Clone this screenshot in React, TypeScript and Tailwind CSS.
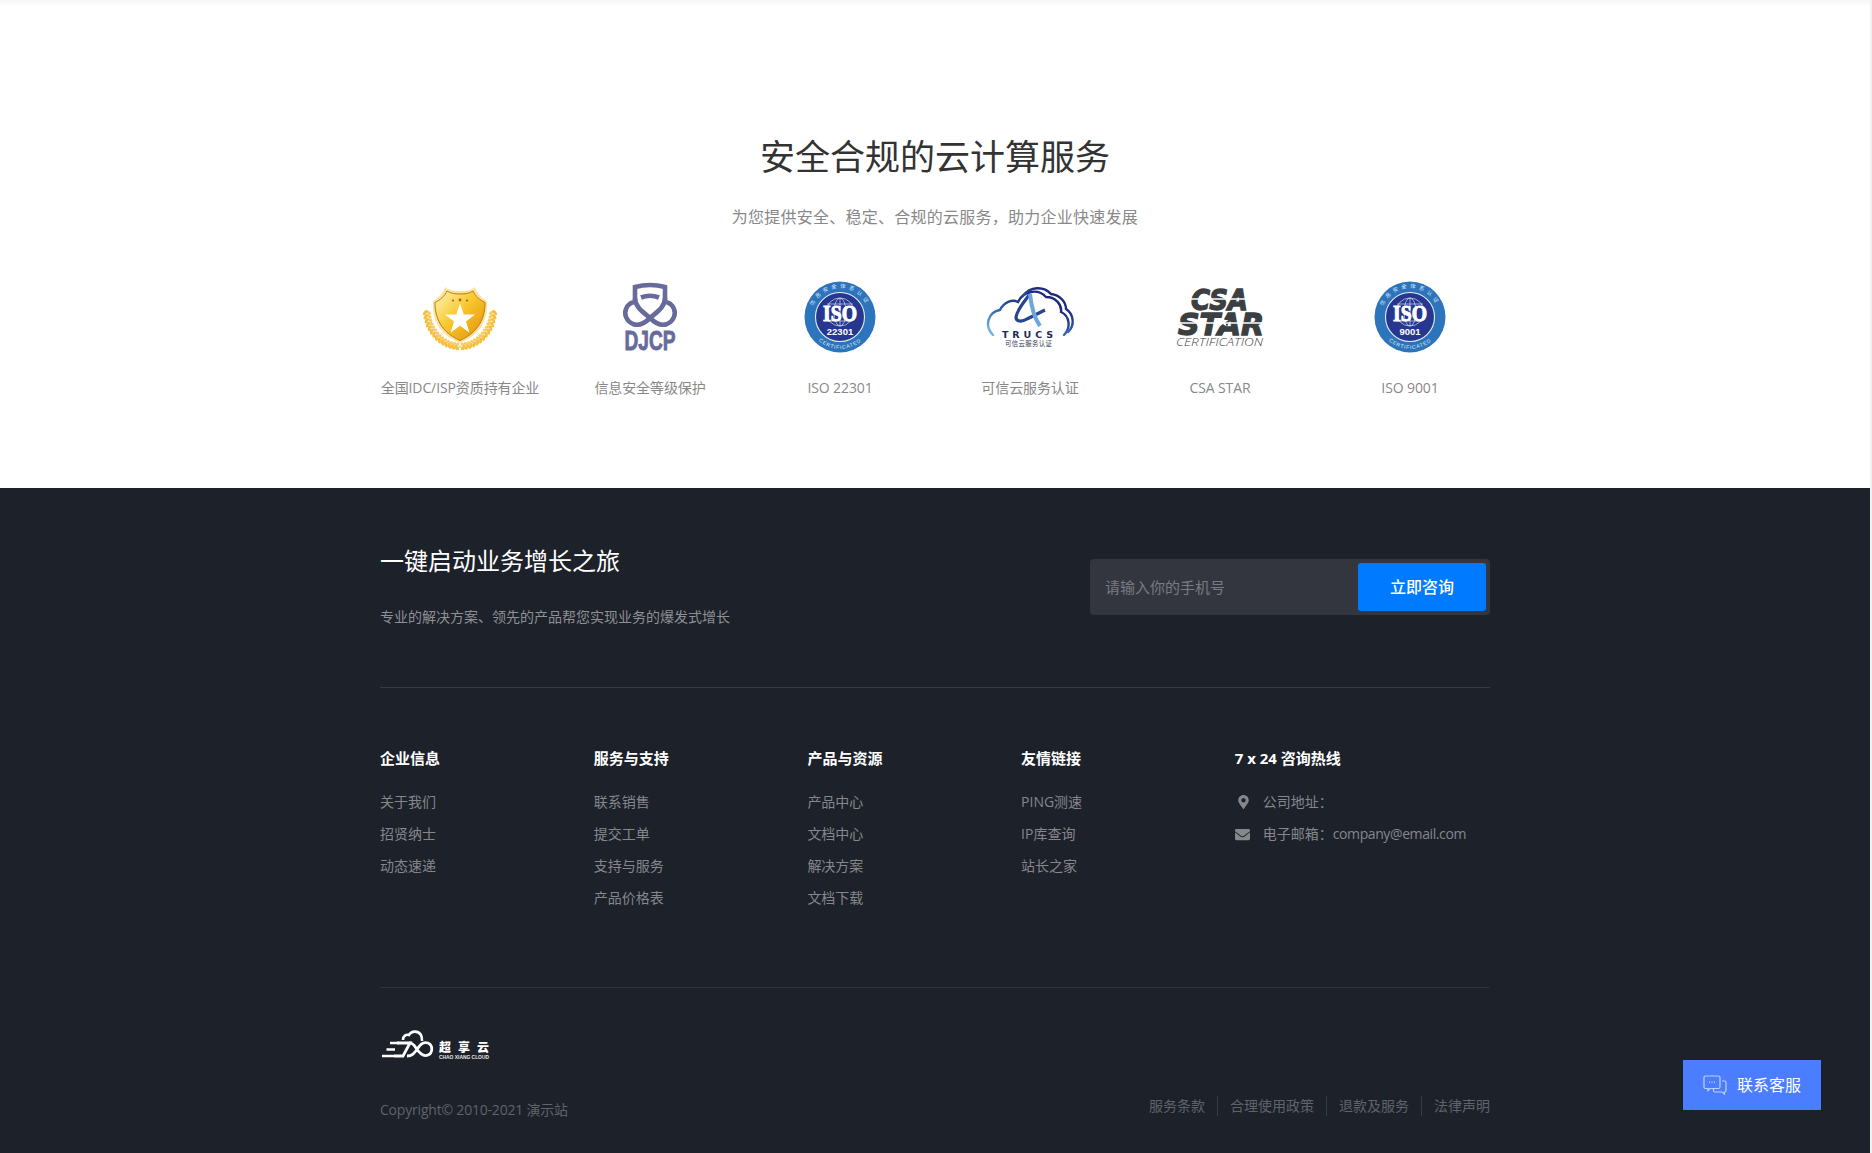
import React from 'react'
import { FaMapMarkerAlt, FaEnvelope } from 'react-icons/fa'

const fontStack = 'font-["Open_Sans","Noto_Sans_CJK_SC",sans-serif]'

const columns = [
  { title: '企业信息', links: ['关于我们', '招贤纳士', '动态速递'] },
  { title: '服务与支持', links: ['联系销售', '提交工单', '支持与服务', '产品价格表'] },
  { title: '产品与资源', links: ['产品中心', '文档中心', '解决方案', '文档下载'] },
  { title: '友情链接', links: ['PING测速', 'IP库查询', '站长之家'] },
]

const legalLinks = ['服务条款', '合理使用政策', '退款及服务', '法律声明']

const ShieldLogo = () => {
  const leaves: { x: number; y: number; r: number; o: number }[] = []
  for (let i = 0; i < 14; i++) {
    const deg = 176 - i * 6.2
    const a = (Math.PI / 180) * deg
    leaves.push({ x: 50 + Math.cos(a) * 35, y: 30 + Math.sin(a) * 38, r: deg - 50, o: 1 })
    leaves.push({ x: 50 + Math.cos(a) * 31.5, y: 30 + Math.sin(a) * 35, r: deg + 40, o: 0.8 })
  }
  return (
    <svg viewBox="0 0 100 74" className="h-[74px] w-[100px]">
      <defs>
        <linearGradient id="gold" x1="0.1" y1="0.1" x2="0.9" y2="0.85">
          <stop offset="0" stopColor="#fdeb9c" />
          <stop offset="0.45" stopColor="#f8c92e" />
          <stop offset="1" stopColor="#e79a0c" />
        </linearGradient>
      </defs>
      {leaves.map((l, i) => (
        <g key={i} opacity={l.o}>
          <ellipse cx={l.x} cy={l.y} rx="3" ry="1.5" fill="#f5bf3a" transform={`rotate(${l.r} ${l.x} ${l.y})`} />
          <ellipse cx={100 - l.x} cy={l.y} rx="3" ry="1.5" fill="#f5bf3a" transform={`rotate(${-l.r} ${100 - l.x} ${l.y})`} />
        </g>
      ))}
      <path d="M46 70l4-4 4 4" fill="none" stroke="#f4c65a" strokeWidth="1.2" />
      <path d="M50 11C44 11 38 10 35 7C33 13 28 19 23 21C22 38 28 54 50 63C72 54 78 38 77 21C72 19 67 13 65 7C62 10 56 11 50 11Z" fill="#fbe29a" />
      <path d="M50 14C44 14 40 13 37 11C35 16 30 20 25 22.5C25 38 31 52 50 60.5C69 52 75 38 75 22.5C70 20 65 16 63 11C60 13 56 14 50 14Z" fill="url(#gold)" stroke="#c07a18" strokeWidth="1" />
      <polygon points="50,23.5 53.8,34.5 65,34.5 56,41.4 59.4,52.5 50,45.8 40.6,52.5 44,41.4 35,34.5 46.2,34.5" fill="#fff" />
      <circle cx="43" cy="20.5" r="1.1" fill="#b0601c" />
      <circle cx="50" cy="20" r="1.4" fill="#b0601c" />
      <circle cx="57" cy="20.5" r="1.1" fill="#b0601c" />
    </svg>
  )
}

const DjcpLogo = () => (
  <svg viewBox="0 0 100 74" className="h-[74px] w-[100px]">
    <g fill="none" stroke="#666b9b" strokeWidth="4.6">
      <path d="M35 20V7Q50 3 65 7V20" />
      <path d="M35 18C35 27 43 32 50 38C56 44 62 46 67 44C74 41 76 34 74 29C72 24 68 22 64 22" />
      <path d="M65 18C65 27 57 32 50 38C44 44 38 46 33 44C26 41 24 34 26 29C28 24 32 22 36 22" />
      <path d="M41 17.5Q50 14 59 17.5" />
    </g>
    <text x="24.5" y="70" textLength="51" lengthAdjust="spacingAndGlyphs" fontFamily="Liberation Sans" fontWeight="700" fontSize="27.5" fill="#666b9b" stroke="#666b9b" strokeWidth="0.9">
      DJCP
    </text>
  </svg>
)

const IsoLogo = ({ id, code }: { id: string; code: string }) => (
  <svg viewBox="0 0 100 74" className="h-[74px] w-[100px]">
    <defs>
      <path id={`${id}-top`} d="M21 37A29 29 0 0 1 79 37" />
      <path id={`${id}-bottom`} d="M18 37A32 32 0 0 0 82 37" />
    </defs>
    <circle cx="50" cy="37" r="35.5" fill="#2c74bb" />
    <circle cx="50" cy="37" r="24.5" fill="#263790" stroke="#e6edf7" strokeWidth="1.1" />
    <text fontSize="5.4" fill="#dbe8f6" fontFamily="Noto Sans CJK SC">
      <textPath href={`#${id}-top`} startOffset="50%" textAnchor="middle" letterSpacing="3.2">
        信息安全体系认证
      </textPath>
    </text>
    <text fontSize="5.2" fill="#dbe8f6" fontFamily="Liberation Sans">
      <textPath href={`#${id}-bottom`} startOffset="50%" textAnchor="middle" letterSpacing="0.8">
        CERTIFICATED
      </textPath>
    </text>
    <g fill="none" stroke="#d4dcf0" strokeWidth="0.7">
      <ellipse cx="50" cy="32" rx="14" ry="14" />
      <ellipse cx="50" cy="32" rx="6" ry="14" />
      <path d="M37 24H63M38 41H62M50 18V46" />
    </g>
    <text x="50" y="41" textAnchor="middle" fontFamily="Liberation Serif" fontWeight="700" fontSize="23" fill="#fff" stroke="#fff" strokeWidth="1" textLength="34" lengthAdjust="spacingAndGlyphs">
      ISO
    </text>
    <text x="50" y="55" textAnchor="middle" fontFamily="Liberation Sans" fontWeight="700" fontSize="9.5" fill="#fff">
      {code}
    </text>
  </svg>
)

const TrucsLogo = () => (
  <svg viewBox="0 0 100 74" className="h-[74px] w-[100px]">
    <defs>
      <linearGradient id="cloud" x1="0" y1="1" x2="0.7" y2="0">
        <stop offset="0.1" stopColor="#6fb0e0" />
        <stop offset="0.5" stopColor="#2c5aa8" />
        <stop offset="0.8" stopColor="#1b2a7c" />
      </linearGradient>
    </defs>
    <g fill="none" stroke="url(#cloud)" strokeWidth="2.4" strokeLinecap="round">
      <path d="M13 55C4 46 8 32 20 30C24 22 32 19 38 22C43 11 58 8 66 17C76 17 82 25 81 32C90 36 91 48 84 55" />
      <path d="M43 16C50 6 64 6 71 14C80 15 86 22 86 29C94 34 95 46 88 52" />
    </g>
    <path d="M50 14C44 22 37 30 36 37C36 42 42 42 47 39L65 30" fill="none" stroke="#27468f" strokeWidth="3.2" />
    <path d="M50 14C51 24 53 36 60 46" fill="none" stroke="#6ea6d9" strokeWidth="4" />
    <text x="22" y="58" textLength="51" fontFamily="DejaVu Sans" fontWeight="700" fontSize="9.5" fill="#1e2a56">
      TRUCS
    </text>
    <text x="25" y="66" textLength="47" fontFamily="Noto Sans CJK SC" fontSize="6.4" fill="#333a55">
      可信云服务认证
    </text>
  </svg>
)

const CsaLogo = () => (
  <svg viewBox="0 0 100 74" className="h-[74px] w-[100px]">
    <g fontFamily="DejaVu Sans" fontWeight="700" fill="#3b3f42" stroke="#3b3f42" strokeWidth="1.3">
      <text x="21" y="30" textLength="57" lengthAdjust="spacingAndGlyphs" fontSize="29" fontStyle="italic">
        CSA
      </text>
      <text x="8" y="55" textLength="86" lengthAdjust="spacingAndGlyphs" fontSize="30" fontStyle="italic">
        STAR
      </text>
    </g>
    <path d="M15 19H85M5 43H95" stroke="#fff" strokeWidth="1.5" />
    <polygon points="53,36 54.6,40 58.5,40 55.4,42.6 56.6,46.5 53,44 49.4,46.5 50.6,42.6 47.5,40 51.4,40" fill="#fff" />
    <text x="6" y="66" textLength="87" lengthAdjust="spacingAndGlyphs" fontFamily="Open Sans" fontWeight="300" fontStyle="italic" fontSize="10.5" fill="#3b3f42">
      CERTIFICATION
    </text>
  </svg>
)

const badges = [
  { label: '全国IDC/ISP资质持有企业', logo: <ShieldLogo /> },
  { label: '信息安全等级保护', logo: <DjcpLogo /> },
  { label: 'ISO 22301', logo: <IsoLogo id="iso-a" code="22301" /> },
  { label: '可信云服务认证', logo: <TrucsLogo /> },
  { label: 'CSA STAR', logo: <CsaLogo /> },
  { label: 'ISO 9001', logo: <IsoLogo id="iso-b" code="9001" /> },
]

const FooterLogo = () => (
  <svg viewBox="0 0 110 32" className="h-8 w-[110px]">
    <g fill="none" stroke="#fff">
      <path d="M10 15H19M6.5 21.5H15M2 28H14" strokeWidth="2.6" />
      <path d="M17 15H30L23 28H14" strokeWidth="2.8" />
      <path d="M27 28C33 28 35 24 38 20C41 15 45 14 48 15C53 17 53 25 48 27C44 29 40 26 36 20C33 15 31 15 29 15" strokeWidth="2.8" />
      <path d="M23 12C23 8 26 6 29 7C31 3 38 2 41 7C42 9 42 11 42 13" strokeWidth="2.6" />
    </g>
    <text x="59" y="24" textLength="50" fontFamily="Noto Sans CJK SC" fontWeight="900" fontSize="12" fill="#fff">
      超享云
    </text>
    <text x="59" y="30.5" textLength="50" lengthAdjust="spacingAndGlyphs" fontFamily="Liberation Sans" fontWeight="700" fontSize="5" fill="#e6e6e6">
      CHAO XIANG CLOUD
    </text>
  </svg>
)

const ChatIcon = () => (
  <svg viewBox="0 0 24 20" className="h-5 w-6" fill="none" stroke="#fff" strokeOpacity="0.65" strokeWidth="1.2">
    <path d="M2.5 1H15.5A1.5 1.5 0 0 1 17 2.5V12A1.5 1.5 0 0 1 15.5 13.5H7L5 15.5V13.5H2.5A1.5 1.5 0 0 1 1 12V2.5A1.5 1.5 0 0 1 2.5 1Z" />
    <path d="M19 6H21.5A1.5 1.5 0 0 1 23 7.5V15.5A1.5 1.5 0 0 1 21.5 17V19L19 17H12A1.5 1.5 0 0 1 10.5 15.5V14" />
    <path d="M6 7.2H7M8.5 7.2H9.5M11 7.2H12" strokeWidth="1.5" />
  </svg>
)

const App = () => {
  return (
    <div className={`h-[1153px] overflow-hidden bg-[#f1f1f1] pr-[2px] ${fontStack}`}>
      <section className="h-[488px] bg-linear-to-b from-[#f6f6f6] to-white to-[6px] pt-[133px] text-center">
        <h2 className="text-[35px] leading-[48px] font-normal text-[#333]">安全合规的云计算服务</h2>
        <p className="mt-6 text-base leading-6 tracking-[0.25px] text-[#888]">为您提供安全、稳定、合规的云服务，助力企业快速发展</p>
        <div className="mx-auto mt-[51px] grid w-[1140px] grid-cols-6">
          {badges.map((b) => (
            <div key={b.label} className="flex flex-col items-center">
              {b.logo}
              <span className="mt-6 text-sm leading-5 tracking-[-0.1px] text-[#888]">{b.label}</span>
            </div>
          ))}
        </div>
      </section>

      <footer className="h-[665px] bg-[#1d212a] pt-[57px]">
        <div className="mx-auto w-[1110px]">
          <div className="flex items-start justify-between border-b border-[#373a43] pb-[60px]">
            <div>
              <h3 className="text-2xl leading-8 font-normal text-white">一键启动业务增长之旅</h3>
              <p className="mt-[30px] text-sm leading-5 text-[#8e9094]">专业的解决方案、领先的产品帮您实现业务的爆发式增长</p>
            </div>
            <div className="mt-[14px] flex h-14 w-[400px] items-center rounded bg-[#33363f] p-1">
              <input
                placeholder="请输入你的手机号"
                className="min-w-0 flex-1 bg-transparent px-[11px] text-[15px] text-white outline-none placeholder:text-[#777a80]"
              />
              <button className="h-12 w-32 rounded-[3px] bg-[#007bff] text-base font-medium text-white">立即咨询</button>
            </div>
          </div>

          <div className="grid grid-cols-[repeat(4,213.7px)_1fr] border-b border-[#2e3139] pt-[60px] pb-[73px]">
            {columns.map((col) => (
              <div key={col.title}>
                <h4 className="text-[15px] leading-5 font-bold text-white">{col.title}</h4>
                <ul className="mt-[18px]">
                  {col.links.map((link) => (
                    <li key={link} className="text-sm leading-8 text-[#85878b]">
                      {link}
                    </li>
                  ))}
                </ul>
              </div>
            ))}
            <div>
              <h4 className="text-[15px] leading-5 font-bold text-white">7 x 24 咨询热线</h4>
              <ul className="mt-[18px]">
                <li className="flex items-center text-sm leading-8 text-[#85878b]">
                  <span className="flex w-7 justify-start pl-[3px]">
                    <FaMapMarkerAlt className="h-[14px] w-[11px] text-[#85878b]" />
                  </span>
                  公司地址：
                </li>
                <li className="flex items-center text-sm leading-8 text-[#85878b]">
                  <span className="flex w-7 justify-start">
                    <FaEnvelope className="h-[15px] w-[15px] text-[#85878b]" />
                  </span>
                  电子邮箱：<span className="tracking-[-0.4px]">company@email.com</span>
                </li>
              </ul>
            </div>
          </div>

          <div className="pt-10">
            <FooterLogo />
            <div className="mt-9 flex items-start justify-between">
              <span className="mt-1 text-sm leading-5 tracking-[-0.2px] text-[#5f636b]">Copyright© 2010-2021 演示站</span>
              <div className="flex items-center text-sm leading-5 text-[#5f636b]">
                {legalLinks.map((link, i) => (
                  <span key={link} className={i > 0 ? 'ml-3 border-l border-[#363a42] pl-3' : ''}>
                    {link}
                  </span>
                ))}
              </div>
            </div>
          </div>
        </div>
      </footer>

      <button className="fixed right-[51px] bottom-[43px] flex h-[50px] w-[138px] items-center gap-[10px] bg-[#4a7dff] pl-5 text-base text-white">
        <ChatIcon />
        联系客服
      </button>
    </div>
  )
}

export default App
